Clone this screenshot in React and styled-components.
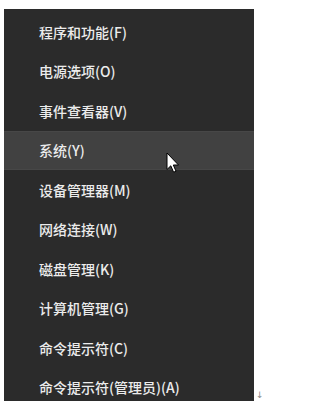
import React from "react";
import styled, { createGlobalStyle } from "styled-components";

const Global = createGlobalStyle`
  html, body { margin: 0; padding: 0; background: #ffffff; }
  body { font-family: "Noto Sans CJK SC", "Noto Sans", sans-serif; }
`;

const Page = styled.div`
  display: flex;
  align-items: flex-start;
  padding: 9px 0 0 4px;
  width: 271px;
  height: 410px;
  box-sizing: border-box;
`;

const Menu = styled.div`
  position: relative;
  flex: none;
  width: 250px;
  height: 392px;
  background: #2b2b2b;
  overflow: hidden;
  padding-top: 3px;
  box-sizing: border-box;
`;

const Item = styled.div`
  height: 39.5px;
  display: flex;
  align-items: center;
  padding-left: 35px;
  box-sizing: border-box;
  color: #ececec;
  font-size: 14px;
  font-weight: 500;
  letter-spacing: 0;
  background: ${(p) => (p.$active ? "#414141" : "transparent")};
  border-top: 1px solid ${(p) => (p.$active ? "#474747" : "transparent")};
  border-bottom: 1px solid ${(p) => (p.$active ? "#474747" : "transparent")};
`;

const Cursor = styled.svg`
  position: absolute;
  left: 162px;
  top: 143px;
  width: 14px;
  height: 22px;
`;

const Arrow = styled.span`
  align-self: flex-end;
  font-family: "DejaVu Sans", sans-serif;
  font-size: 9px;
  color: #8a8a8a;
  margin: 0 0 10px 2px;
  line-height: 1;
`;

const items = [
  "程序和功能(F)",
  "电源选项(O)",
  "事件查看器(V)",
  "系统(Y)",
  "设备管理器(M)",
  "网络连接(W)",
  "磁盘管理(K)",
  "计算机管理(G)",
  "命令提示符(C)",
  "命令提示符(管理员)(A)",
];

export default function App() {
  return (
    <>
      <Global />
      <Page>
        <Menu>
          {items.map((t, i) => (
            <Item key={t} $active={i === 3}>
              {t}
            </Item>
          ))}
          <Cursor viewBox="0 0 14 22">
            <path
              d="M1 1 L1 17.5 L4.8 13.8 L7.6 20.2 L10 19.2 L7.3 13 L12.5 13 Z"
              fill="#ffffff"
              stroke="#000000"
              strokeWidth="1"
              strokeLinejoin="miter"
            />
          </Cursor>
        </Menu>
        <Arrow>↓</Arrow>
      </Page>
    </>
  );
}
